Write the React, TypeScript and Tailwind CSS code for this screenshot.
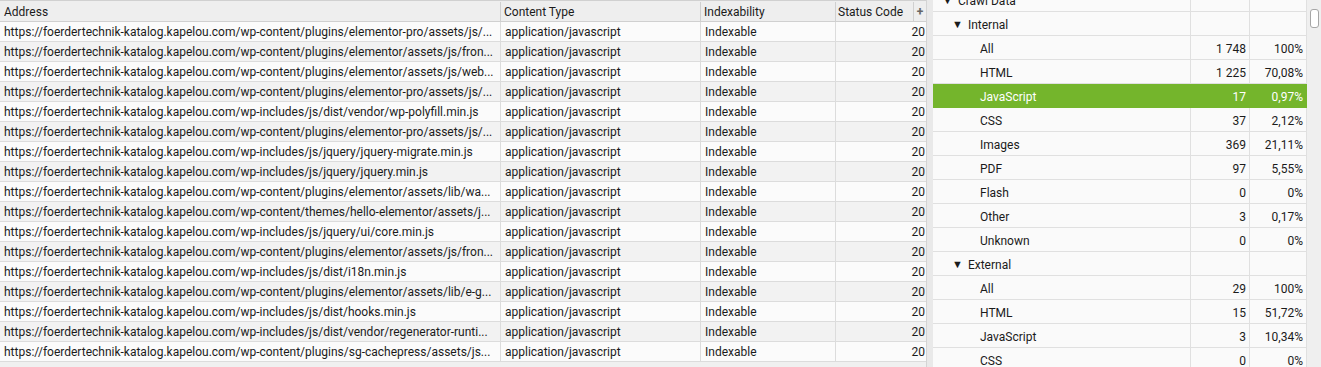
const urls = [
  "https://foerdertechnik-katalog.kapelou.com/wp-content/plugins/elementor-pro/assets/js/...",
  "https://foerdertechnik-katalog.kapelou.com/wp-content/plugins/elementor/assets/js/fron...",
  "https://foerdertechnik-katalog.kapelou.com/wp-content/plugins/elementor/assets/js/web...",
  "https://foerdertechnik-katalog.kapelou.com/wp-content/plugins/elementor-pro/assets/js/...",
  "https://foerdertechnik-katalog.kapelou.com/wp-includes/js/dist/vendor/wp-polyfill.min.js",
  "https://foerdertechnik-katalog.kapelou.com/wp-content/plugins/elementor-pro/assets/js/...",
  "https://foerdertechnik-katalog.kapelou.com/wp-includes/js/jquery/jquery-migrate.min.js",
  "https://foerdertechnik-katalog.kapelou.com/wp-includes/js/jquery/jquery.min.js",
  "https://foerdertechnik-katalog.kapelou.com/wp-content/plugins/elementor/assets/lib/wa...",
  "https://foerdertechnik-katalog.kapelou.com/wp-content/themes/hello-elementor/assets/j...",
  "https://foerdertechnik-katalog.kapelou.com/wp-includes/js/jquery/ui/core.min.js",
  "https://foerdertechnik-katalog.kapelou.com/wp-content/plugins/elementor/assets/js/fron...",
  "https://foerdertechnik-katalog.kapelou.com/wp-includes/js/dist/i18n.min.js",
  "https://foerdertechnik-katalog.kapelou.com/wp-content/plugins/elementor/assets/lib/e-g...",
  "https://foerdertechnik-katalog.kapelou.com/wp-includes/js/dist/hooks.min.js",
  "https://foerdertechnik-katalog.kapelou.com/wp-includes/js/dist/vendor/regenerator-runti...",
  "https://foerdertechnik-katalog.kapelou.com/wp-content/plugins/sg-cachepress/assets/js...",
];

type TreeRow = { label: string; level: number; group?: boolean; count?: string; pct?: string; active?: boolean };

const tree: TreeRow[] = [
  { label: "Crawl Data", level: 0, group: true },
  { label: "Internal", level: 1, group: true },
  { label: "All", level: 2, count: "1 748", pct: "100%" },
  { label: "HTML", level: 2, count: "1 225", pct: "70,08%" },
  { label: "JavaScript", level: 2, count: "17", pct: "0,97%", active: true },
  { label: "CSS", level: 2, count: "37", pct: "2,12%" },
  { label: "Images", level: 2, count: "369", pct: "21,11%" },
  { label: "PDF", level: 2, count: "97", pct: "5,55%" },
  { label: "Flash", level: 2, count: "0", pct: "0%" },
  { label: "Other", level: 2, count: "3", pct: "0,17%" },
  { label: "Unknown", level: 2, count: "0", pct: "0%" },
  { label: "External", level: 1, group: true },
  { label: "All", level: 2, count: "29", pct: "100%" },
  { label: "HTML", level: 2, count: "15", pct: "51,72%" },
  { label: "JavaScript", level: 2, count: "3", pct: "10,34%" },
  { label: "CSS", level: 2, count: "0", pct: "0%" },
];

const indent = ["pl-[9px]", "pl-[19px]", "pl-[47px]"];

const UrlTable = () => (
  <div className="w-[927px] h-full shrink-0 flex flex-col bg-[#f0f0f0] border-r border-[#d4d4d4]">
    <div className="flex h-[22px] shrink-0 bg-[#eeeeee] border-y border-[#d0d0d0] pt-[1px]">
      <div className="w-[501px] pl-[4px] border-r border-[#d0d0d0] flex items-center">Address</div>
      <div className="w-[200px] pl-[3px] border-r border-[#d0d0d0] flex items-center">Content Type</div>
      <div className="w-[135px] pl-[3px] border-r border-[#d0d0d0] flex items-center">Indexability</div>
      <div className="w-[78px] pl-[2px] border-r border-[#d0d0d0] flex items-center">Status Code</div>
      <div className="flex-1 flex items-center justify-center text-[#666] font-bold">+</div>
    </div>
    {urls.map((url, i) => (
      <div
        key={i}
        className={`flex h-[20px] shrink-0 border-b border-[#dcdcdc] ${i % 2 ? "bg-[#f2f2f2]" : "bg-[#fbfbfb]"}`}
      >
        <div className="w-[501px] pl-[4px] pt-[1px] border-r border-[#dcdcdc] flex items-center whitespace-nowrap overflow-hidden">
          {url}
        </div>
        <div className="w-[200px] pl-[4px] pt-[1px] border-r border-[#dcdcdc] flex items-center">application/javascript</div>
        <div className="w-[135px] pl-[4px] pt-[1px] border-r border-[#dcdcdc] flex items-center">Indexable</div>
        <div className="flex-1 pr-[1px] pt-[1px] flex items-center justify-end">20</div>
      </div>
    ))}
  </div>
);

const OverviewTree = () => (
  <div className="flex-1 h-full overflow-hidden bg-[#fafafa]">
    <div className="mt-[-12px] flex flex-col">
      {tree.map((row, i) => (
        <div
          key={i}
          className={`flex h-[24px] shrink-0 border-b ${row.active ? "bg-[#74b52c] text-white border-[#74b52c]" : "border-[#e0e0e0]"}`}
        >
          <div className={`w-[258px] pt-[2px] flex items-center border-r ${row.active ? "border-[#74b52c]" : "border-[#e0e0e0]"} ${indent[row.level]}`}>
            {row.group && <span className="text-[11px] mr-[5px] leading-none">▼</span>}
            <span>{row.label}</span>
          </div>
          <div className={`w-[59px] pt-[2px] flex items-center justify-end pr-[3px] border-r ${row.active ? "border-[#74b52c]" : "border-[#e0e0e0]"}`}>
            {row.count}
          </div>
          <div className={`flex-1 pt-[2px] flex items-center justify-end pr-[3px] border-r ${row.active ? "border-[#74b52c]" : "border-[#e0e0e0]"}`}>
            {row.pct}
          </div>
        </div>
      ))}
    </div>
  </div>
);

export default function App() {
  return (
    <div className="flex w-[1321px] h-[367px] overflow-hidden bg-[#f0f0f0] text-[12px] text-[#1b1b1b] font-['Roboto',sans-serif]">
      <UrlTable />
      <div className="w-[6px] shrink-0 bg-[#e9e9e9]" />
      <OverviewTree />
      <div className="w-[14px] shrink-0 bg-[#efefef] pt-[9px] pl-[3px]">
        <div className="w-[9px] h-[19px] rounded-[3px] border border-[#a6a6a6] bg-white" />
      </div>
    </div>
  );
}
